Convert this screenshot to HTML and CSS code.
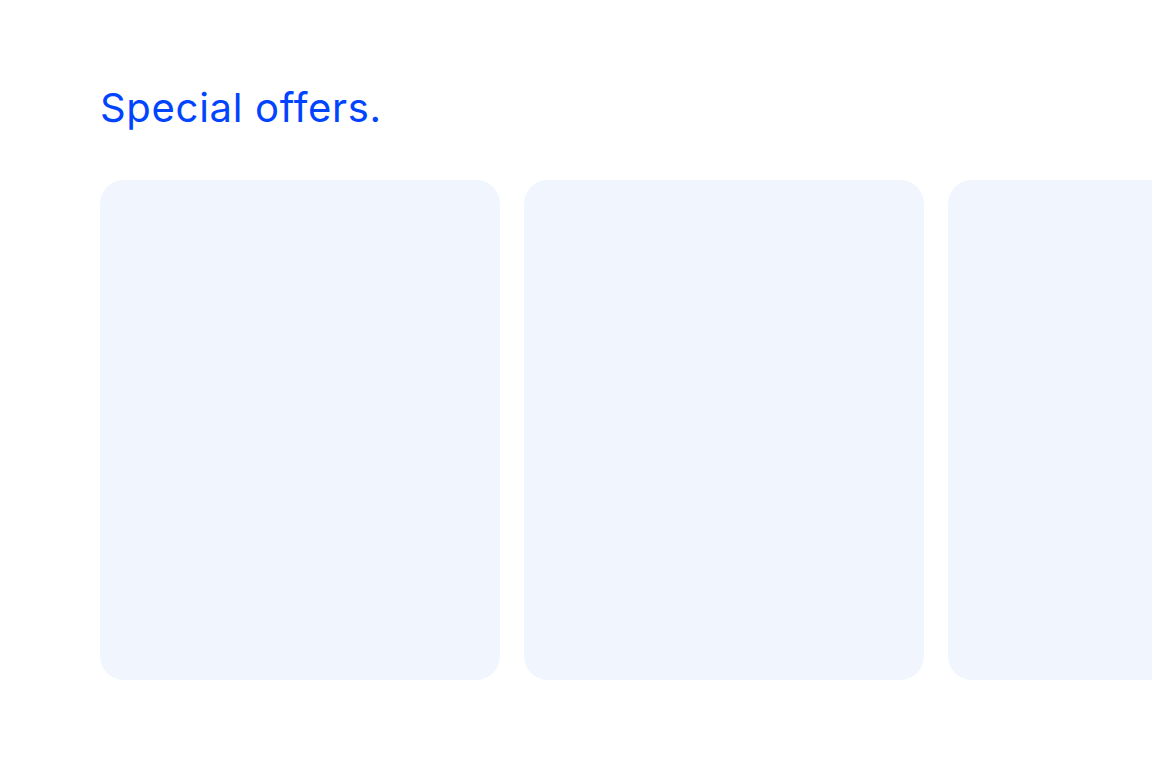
FILE: index.html
```html
<!DOCTYPE html>
<html lang="en">
<head>
<meta charset="utf-8">
<link rel="stylesheet" href="styles.css">
</head>
<body>
<section class="offers">
  <h2 class="title">Special offers.</h2>
  <div class="track">
    <div class="card"></div>
    <div class="card"></div>
    <div class="card"></div>
  </div>
</section>
</body>
</html>
```
FILE: styles.css
```css
html, body {
  margin: 0;
  padding: 0;
  background: #ffffff;
  overflow: hidden;
}
.offers {
  padding: 80px 0 0 100px;
  font-family: Inter, "Noto Sans", sans-serif;
}
.title {
  margin: 0;
  font-size: 40px;
  line-height: 56px;
  font-weight: 400;
  color: #0044ff;
  letter-spacing: 0.7px;
}
.track {
  display: flex;
  gap: 24px;
  margin-top: 44px;
  overflow: hidden;
}
.card {
  flex: 0 0 400px;
  height: 500px;
  border-radius: 24px;
  background: #f1f6fe;
}
```
